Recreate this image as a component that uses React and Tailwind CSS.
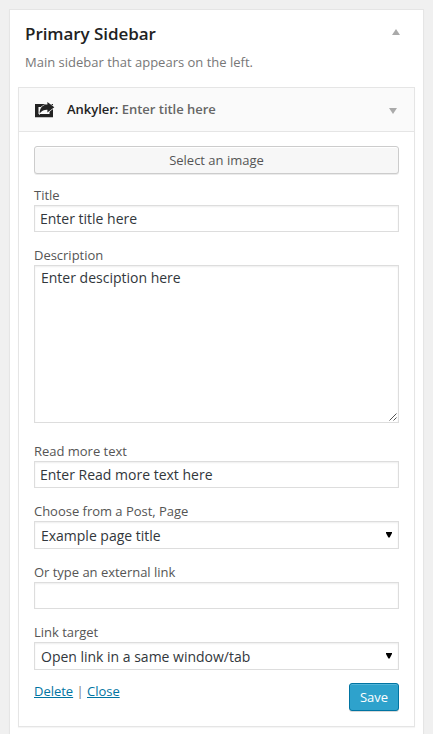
const inputBox =
  'block w-full border border-[#ddd] bg-white shadow-[inset_0_1px_2px_rgba(0,0,0,0.07)] text-[14px] text-[#32373c]';

function Field({ label, className, children }) {
  return (
    <div className={className}>
      <div className="h-[19px] text-[13px] leading-[19px] tracking-[-0.02px] text-[#555]">{label}</div>
      {children}
    </div>
  );
}

function TextInput({ value }) {
  return <div className={`${inputBox} h-[27px] px-[5px] leading-[26px]`}>{value}</div>;
}

function Select({ value }) {
  return (
    <div className={`${inputBox} flex h-[28px] justify-between pl-[6px] pr-[6px] leading-[27px]`}>
      <span className="tracking-[-0.01px]">{value}</span>
      <svg className="mt-[10px] h-[6px] w-[6px]" viewBox="0 0 6 6" fill="#000">
        <path d="M0 0h6v1L3.6 5.6H2.4L0 1z" />
      </svg>
    </div>
  );
}

function ShareIcon() {
  return (
    <svg className="h-[16px] w-[20px]" viewBox="0 0 20 16">
      <path fill="#222" fillRule="evenodd" d="M0 2h18v13.2H0zM3.5 5v7h11V5z" />
      <path
        fill="#222"
        stroke="#fafafa"
        strokeWidth="1.2"
        paintOrder="stroke"
        d="M12.4 0l6.9 5.2-6.9 5.3V7.7C9.2 7.6 7 8.6 4.6 11.5 4.8 5.8 7.4 2.8 12.4 2.6z"
      />
    </svg>
  );
}

export default function App() {
  return (
    <div className="h-[734px] w-[433px] overflow-hidden bg-[#f0f0f0] px-[9px] pt-[9px] font-['Open_Sans',sans-serif]">
      <section className="h-[760px] w-[415px] border border-[#e5e5e5] bg-white px-[8px] shadow-[0_1px_1px_rgba(0,0,0,0.04)]">
        <header className="flex h-[77px] justify-between pl-[7px] pr-[15px]">
          <div>
            <h2 className="mt-[12px] text-[17px] font-semibold leading-[23px] tracking-[-0.06px] text-[#222]">
              Primary Sidebar
            </h2>
            <p className="mt-[8px] text-[13px] leading-[19px] text-[#777]">Main sidebar that appears on the left.</p>
          </div>
          <svg className="mt-[19px] h-[6px] w-[8px]" viewBox="0 0 8 6" fill="#aaa">
            <path d="M4 0l4 6H0z" />
          </svg>
        </header>

        <article className="h-[640px] w-[397px] border border-[#e5e5e5] shadow-[0_1px_1px_rgba(0,0,0,0.04)]">
          <div className="flex h-[44px] items-center border-b border-[#e5e5e5] bg-[#fafafa] pl-[16px] pr-[17px]">
            <ShareIcon />
            <h3 className="ml-[12px] flex-1 text-[13px] font-semibold leading-[19px] tracking-[-0.02px] text-[#222]">
              Ankyler: <span className="text-[#666]">Enter title here</span>
            </h3>
            <svg className="mt-[3px] h-[6px] w-[8px]" viewBox="0 0 8 6" fill="#aaa">
              <path d="M0 0h8L4 6z" />
            </svg>
          </div>

          <div className="px-[15px] pt-[14px]">
            <button className="block h-[28px] w-full rounded-[3px] border border-[#ccc] bg-[#f7f7f7] text-center text-[13px] leading-[26px] text-[#555] shadow-[inset_0_1px_0_#fff,0_1px_0_rgba(0,0,0,0.08)]">
              Select an image
            </button>
            <Field label="Title" className="mt-[12px]">
              <TextInput value="Enter title here" />
            </Field>
            <Field label="Description" className="mt-[14px]">
              <div className={`${inputBox} flex h-[158px] flex-col justify-between pl-[6px]`}>
                <span className="mt-[2px] leading-[20px]">Enter desciption here</span>
                <svg className="mb-px mr-px h-[8px] w-[8px] self-end" viewBox="0 0 8 8" stroke="#555" fill="none">
                  <path d="M.5 7.5l7-7M4.5 7.5l3-3" />
                </svg>
              </div>
            </Field>
            <Field label="Read more text" className="mt-[19px]">
              <TextInput value="Enter Read more text here" />
            </Field>
            <Field label="Choose from a Post, Page" className="mt-[14px]">
              <Select value="Example page title" />
            </Field>
            <Field label="Or type an external link" className="mt-[14px]">
              <TextInput value="" />
            </Field>
            <Field label="Link target" className="mt-[14px]">
              <Select value="Open link in a same window/tab" />
            </Field>
            <div className="mt-[13px] flex justify-between">
              <div className="text-[13px] leading-[17px] tracking-[-0.02px] text-[#0074a2]">
                <a className="underline">Delete</a> <span className="text-[#777]">|</span>{' '}
                <a className="underline">Close</a>
              </div>
              <button className="h-[28px] w-[50px] rounded-[3px] border border-[#0074a2] bg-[#2ea2cc] text-[13px] leading-[26px] text-white shadow-[inset_0_1px_0_rgba(120,200,230,0.5),0_1px_0_rgba(0,0,0,0.15)]">
                Save
              </button>
            </div>
          </div>
        </article>
      </section>
    </div>
  );
}
